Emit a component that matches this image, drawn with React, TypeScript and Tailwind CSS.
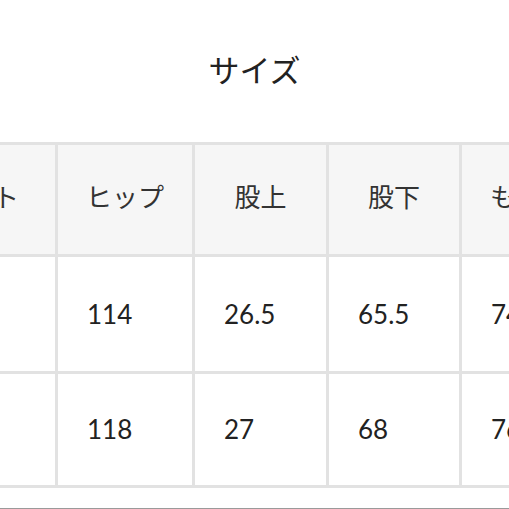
import React from "react";

const font = { fontFamily: '"Lato", "Noto Sans CJK JP", sans-serif' };

const headers = ["ウエスト", "ヒップ", "股上", "股下", "もも幅"];
const rows = [
  ["80", "114", "26.5", "65.5", "74"],
  ["84", "118", "27", "68", "76"],
];

export default function App() {
  return (
    <div
      className="w-[509px] h-[509px] overflow-hidden bg-white relative"
      style={font}
    >
      <div className="h-[142px] flex items-center justify-center pb-[2px]">
        <h1 className="text-[31px] leading-none text-[#222] font-normal">サイズ</h1>
      </div>
      <div className="ml-[-124px] w-max bg-[#e2e2e2] p-[3px] grid grid-cols-[176px_134px_131px_130px_134px] grid-rows-[109px_114px_111px] gap-[3px]">
        {headers.map((h) => (
          <div
            key={h}
            className="bg-[#f6f6f6] flex items-center justify-center text-[26px] text-[#333] pb-[4px] whitespace-nowrap"
          >
            {h}
          </div>
        ))}
        {rows.map((r, i) =>
          r.map((v, j) => (
            <div
              key={`${i}-${j}`}
              className="bg-white flex items-center pl-[29px] text-[26px] text-[#222]"
            >
              {v}
            </div>
          ))
        )}
      </div>
      <div className="mt-[20px] h-px bg-[#9a9a9a] w-full" />
    </div>
  );
}
